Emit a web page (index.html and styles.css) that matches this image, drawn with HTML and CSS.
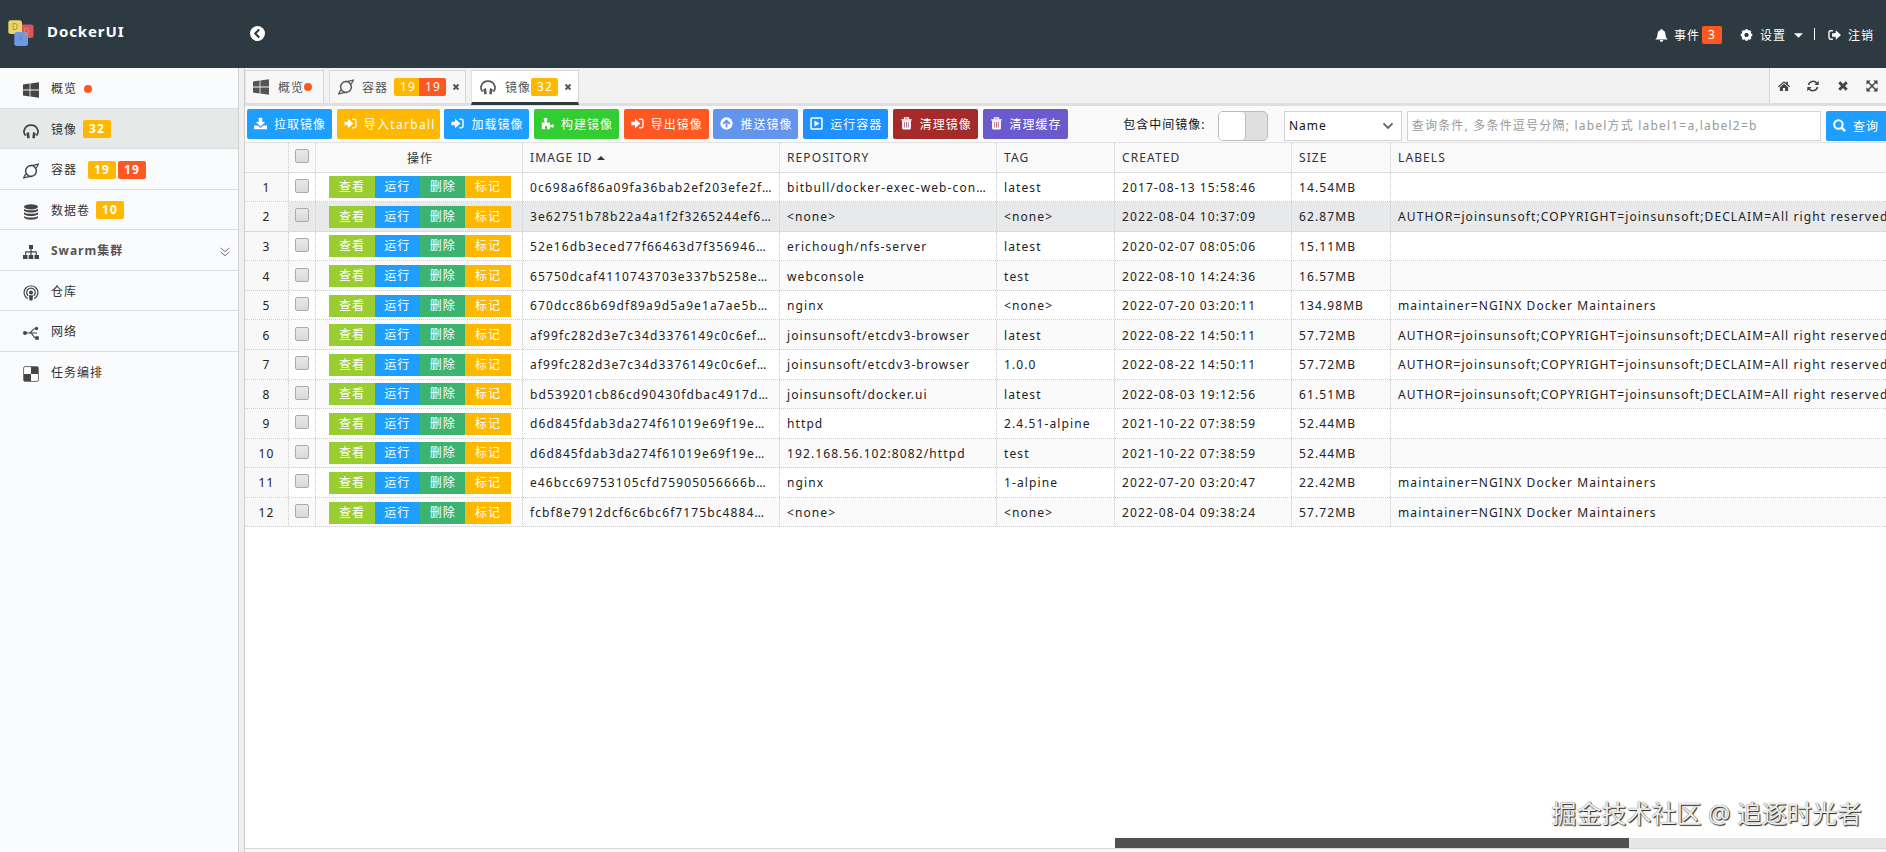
FILE: index.html
```html
<!DOCTYPE html>
<html lang="zh-CN">
<head>
    <meta charset="UTF-8">
    <title>DockerUI</title>
    <link rel="stylesheet" href="styles.css">
</head>
<body>
    <!-- Icon set -->
    <svg class="sprite">
        <symbol id="i-windows" viewBox="0 0 16 16"><path d="M0 2.4l6.6-.9v6.1H0zM7.4 1.4L16 .2v7.4H7.4zM0 8.4h6.6v6.1L0 13.6zM7.4 8.4H16v7.4l-8.6-1.2z"/></symbol>
        <symbol id="i-headphones" viewBox="0 0 16 16"><path d="M2.6 12.6C.9 10.800.7 8.500 1.300 6.900 2.300 4 4.900 2.200 8 2.200s5.700 1.800 6.700 4.700c.6 1.600.4 3.900-1.300 5.700" fill="none" stroke="currentColor" stroke-width="1.700"/><path d="M3.200 10.200L6 8.900l.7 6-2.300.5zM12.800 10.200L10 8.900l-.7 6 2.300.5z"/></symbol>
        <symbol id="i-ring" viewBox="0 0 16 16"><circle cx="8" cy="8" r="5.400" fill="none" stroke="currentColor" stroke-width="1.500"/><path d="M7 2.600c3-.2 5.500-.6 8.300-1.500-.3 1.500-1 2.700-2.300 3.900M9 13.400c-3 .2-5.500.6-8.300 1.500.3-1.500 1-2.700 2.300-3.900" fill="none" stroke="currentColor" stroke-width="1.200"/></symbol>
        <symbol id="i-database" viewBox="0 0 16 16"><ellipse cx="8" cy="2.800" rx="7" ry="2.600"/><path d="M1 4.700c2 2 12 2 14 0v2c-2 2.400-12 2.400-14 0zM1 8.300c2 2 12 2 14 0v2c-2 2.400-12 2.400-14 0zM1 11.900c2 2 12 2 14 0v1.600c-2 2.900-12 2.900-14 0z"/></symbol>
        <symbol id="i-sitemap" viewBox="0 0 16 16"><path d="M6 1h4v4H8.600v2.300h5.200V11H16v4h-4.500v-4h1.200V8.500H8.600V11h1.700v4H5.700v-4h1.700V8.500H3.300V11h1.200v4H0v-4h2.200V7.300h5.200V5H6z"/></symbol>
        <symbol id="i-podcast" viewBox="0 0 16 16"><g fill="none" stroke="currentColor" stroke-width="1.200"><path d="M4.700 13.700a6.900 6.900 0 1 1 6.600 0"/><path d="M5.200 10.700a4.300 4.300 0 1 1 5.600 0"/></g><circle cx="8" cy="7.500" r="2"/><path d="M5.900 10.200h4.200l-.6 5.300h-3z"/></symbol>
        <symbol id="i-share" viewBox="0 0 16 16"><path d="M1.500 8H14M6 8c3 0 2.500-4.500 7-4.500M7.500 8c2.500 0 2 5 6 5" fill="none" stroke="currentColor" stroke-width="1.200"/><circle cx="2" cy="8" r="2"/><circle cx="13.500" cy="3.500" r="1.700"/><path d="M12.300 11.300h3.500v3.500h-3.500z"/></symbol>
        <symbol id="i-board" viewBox="0 0 16 16"><rect x=".6" y=".6" width="14.800" height="14.800" rx="1.500" fill="#fff" stroke="currentColor" stroke-width=".8"/><path d="M8 1h7v7H8zM1 8h7v7H1z"/></symbol>
        <symbol id="i-down2" viewBox="0 0 16 16"><path d="M1 1.500l7 6 7-6M1 8l7 6 7-6" fill="none" stroke="currentColor" stroke-width="1.600"/></symbol>
        <symbol id="i-back" viewBox="0 0 16 16"><circle cx="8" cy="8" r="8"/><path d="M9.800 3.800L5.600 8l4.200 4.200" fill="none" stroke="#2d3a41" stroke-width="2.200"/></symbol>
        <symbol id="i-bell" viewBox="0 0 16 16"><path d="M8 0c.8 0 1.100.5 1.100 1.200C11.800 1.900 12.700 4 12.900 6.500c.2 3 .9 4.900 2.700 6.300H.4C2.200 11.400 2.900 9.500 3.100 6.500 3.300 4 4.200 1.900 6.900 1.200 6.900.5 7.200 0 8 0zM5.900 13.500h4.200C9.900 16.600 6.100 16.600 5.900 13.500z"/></symbol>
        <symbol id="i-cog" viewBox="0 0 16 16"><circle cx="8" cy="8" r="4.300" fill="none" stroke="currentColor" stroke-width="3.600"/><path d="M8 .9v3M8 12.100v3M.9 8h3M12.100 8h3M3 3l2 2M11 11l2 2M3 13l2-2M11 5l2-2" stroke="currentColor" stroke-width="3"/><circle cx="8" cy="8" r="2.400" fill="#2d3a41"/></symbol>
        <symbol id="i-caret" viewBox="0 0 16 8"><path d="M0 0h16L8 8z"/></symbol>
        <symbol id="i-logout" viewBox="0 0 16 16"><path d="M6 2.800H3.200Q1.200 2.800 1.200 4.800v6.400q0 2 2 2H6" fill="none" stroke="currentColor" stroke-width="1.700"/><path d="M5 5.800h4.500V2.300L16 8l-6.500 5.700v-3.500H5z"/></symbol>
        <symbol id="i-login" viewBox="0 0 16 16"><path d="M10 2.800h2.800q2 0 2 2v6.400q0 2-2 2H10" fill="none" stroke="currentColor" stroke-width="1.700"/><path d="M.5 5.800H5V2.300L11.500 8 5 13.700v-3.500H.5z"/></symbol>
        <symbol id="i-home" viewBox="0 0 16 16"><path d="M8 1.500l3 2.600V2.300h2.200V6L16 8.400l-1 1.100-7-6-7 6L0 8.400z"/><path d="M8 4.900l5.500 4.600v5h-4v-4h-3v4h-4v-5z"/></symbol>
        <symbol id="i-refresh" viewBox="0 0 16 16"><path d="M2 6.700a6.200 6.200 0 0 1 11-2.400M14 9.300a6.200 6.200 0 0 1-11 2.400" fill="none" stroke="currentColor" stroke-width="2"/><path d="M15.600 1v5.800H9.800zM.4 15V9.200h5.800z"/></symbol>
        <symbol id="i-times" viewBox="0 0 16 16"><path d="M3 3l10 10M13 3L3 13" stroke="currentColor" stroke-width="3.800"/></symbol>
        <symbol id="i-expand" viewBox="0 0 16 16"><path d="M3 3l10 10M13 3L3 13" stroke="currentColor" stroke-width="2"/><path d="M.6.600h5.800L.6 6.400zM15.400.6v5.800L9.600.6zM.6 15.400V9.600l5.800 5.800zM15.400 15.400H9.600l5.800-5.800z"/></symbol>
        <symbol id="i-download" viewBox="0 0 16 16"><path d="M5.800.8h4.400V6h3.600L8 11.600 2.200 6h3.600z"/><path d="M0 10.500h4.600L8 13.600l3.400-3.100H16v4.700H0z"/></symbol>
        <symbol id="i-puzzle" viewBox="0 0 16 16"><path d="M1 6.800h3.500C5.200 5.600 3.200 4.700 3.300 3 3.400.2 8 .2 8 3c0 1.700-1.800 2.600-1.100 3.800H11v3c1.200.8 1.800-.8 3.200-.8 2.400 0 2.400 4 0 4-1.400 0-2-1.500-3.200-.8v3H7.300c-.6-1.200.4-1.500.4-2.700 0-1.700-3-1.700-3 0 0 1.200 1 1.500.3 2.700H1z"/></symbol>
        <symbol id="i-up" viewBox="0 0 16 16"><circle cx="8" cy="8" r="7.600"/><path d="M8 13V5M3.800 8.600L8 4.400l4.200 4.200" fill="none" stroke="#6495ed" stroke-width="2.200"/></symbol>
        <symbol id="i-play" viewBox="0 0 16 16"><rect x="1.300" y="1.300" width="13.400" height="13.400" rx="1" fill="none" stroke="currentColor" stroke-width="1.900"/><path d="M5.500 4.200L11.800 8l-6.300 3.800z"/></symbol>
        <symbol id="i-trash" viewBox="0 0 16 16"><path d="M5.500 3V1.200h5V3M1.500 3.500h13" fill="none" stroke="currentColor" stroke-width="1.500"/><path d="M2.600 4h10.800v9.800q0 1.700-1.700 1.700H4.300q-1.700 0-1.700-1.700z"/><path d="M5.700 6v7M8 6v7M10.300 6v7" stroke="#a05078" stroke-width="1"/></symbol>
        <symbol id="i-search" viewBox="0 0 16 16"><path d="M10.500 10.500L15 15" stroke="currentColor" stroke-width="3"/><circle cx="6.700" cy="6.700" r="5.200" fill="none" stroke="currentColor" stroke-width="2.500"/></symbol>
        <symbol id="i-chevron" viewBox="0 0 16 16"><path d="M2 4.500l6 6 6-6" fill="none" stroke="currentColor" stroke-width="2.500"/></symbol>
    </svg>

    <div class="header">
        <svg class="logo" viewBox="0 0 26 27">
            <rect x="12" y="4.500" width="13.500" height="13.500" rx="2.500" fill="#d9575b"/>
            <rect x=".3" y=".3" width="13.700" height="13.700" rx="2.500" fill="#ead467"/>
            <rect x="6.300" y="12" width="13.700" height="14" rx="2.500" fill="#6b9be8"/>
            <text x="4" y="10" fill="#a39044">D</text>
            <text x="15.500" y="14.500" fill="#ea8465">D</text>
            <text x="10.500" y="22" fill="#8878c0">A</text>
        </svg>
        <span class="brand">DockerUI</span>
        <svg class="icon toggle"><use href="#i-back"/></svg>
        <div class="user-menu">
            <svg class="icon bell"><use href="#i-bell"/></svg><span>事件</span><b class="badge red count">3</b>
            <svg class="icon cog"><use href="#i-cog"/></svg><span>设置</span><svg class="icon caret"><use href="#i-caret"/></svg>
            <i class="divider"></i>
            <svg class="icon out"><use href="#i-logout"/></svg><span>注销</span>
        </div>
    </div>

    <div class="main">
        <div class="sidebar">
            <div class="item"><svg class="icon"><use href="#i-windows"/></svg><span>概览</span><i class="dot"></i></div>
            <div class="item active"><svg class="icon"><use href="#i-headphones"/></svg><span>镜像</span><b class="badge">32</b></div>
            <div class="item"><svg class="icon"><use href="#i-ring"/></svg><span>容器</span><b class="badge far">19</b><b class="badge red">19</b></div>
            <div class="item"><svg class="icon"><use href="#i-database"/></svg><span>数据卷</span><b class="badge">10</b></div>
            <div class="item"><svg class="icon"><use href="#i-sitemap"/></svg><span class="group">Swarm集群</span><svg class="icon fold"><use href="#i-down2"/></svg></div>
            <div class="item"><svg class="icon"><use href="#i-podcast"/></svg><span>仓库</span></div>
            <div class="item"><svg class="icon"><use href="#i-share"/></svg><span>网络</span></div>
            <div class="item last"><svg class="icon"><use href="#i-board"/></svg><span>任务编排</span></div>
        </div>
        <div class="splitter"></div>

        <div class="content">
            <div class="tabs">
                <div class="tab t1"><svg class="icon"><use href="#i-windows"/></svg><span>概览</span><i class="dot"></i></div>
                <div class="tab t2"><svg class="icon"><use href="#i-ring"/></svg><span>容器</span><b class="badge left">19</b><b class="badge red right">19</b><svg class="icon close"><use href="#i-times"/></svg></div>
                <div class="tab t3 selected"><svg class="icon"><use href="#i-headphones"/></svg><span>镜像</span><b class="badge">32</b><svg class="icon close"><use href="#i-times"/></svg></div>
                <div class="tools">
                    <svg class="icon"><use href="#i-home"/></svg>
                    <svg class="icon"><use href="#i-refresh"/></svg>
                    <svg class="icon"><use href="#i-times"/></svg>
                    <svg class="icon"><use href="#i-expand"/></svg>
                </div>
            </div>

            <div class="toolbar">
                <a class="btn pull"><svg class="icon"><use href="#i-download"/></svg><span>拉取镜像</span></a>
                <a class="btn import"><svg class="icon"><use href="#i-login"/></svg><span>导入tarball</span></a>
                <a class="btn load"><svg class="icon"><use href="#i-login"/></svg><span>加载镜像</span></a>
                <a class="btn build"><svg class="icon"><use href="#i-puzzle"/></svg><span>构建镜像</span></a>
                <a class="btn export"><svg class="icon"><use href="#i-login"/></svg><span>导出镜像</span></a>
                <a class="btn push"><svg class="icon"><use href="#i-up"/></svg><span>推送镜像</span></a>
                <a class="btn run"><svg class="icon"><use href="#i-play"/></svg><span>运行容器</span></a>
                <a class="btn prune"><svg class="icon"><use href="#i-trash"/></svg><span>清理镜像</span></a>
                <a class="btn cache"><svg class="icon"><use href="#i-trash"/></svg><span>清理缓存</span></a>
                <span class="switch-label">包含中间镜像:</span>
                <span class="switch"><i></i></span>
                <div class="select"><span>Name</span><svg class="icon"><use href="#i-chevron"/></svg></div>
                <div class="input">查询条件, 多条件逗号分隔; label方式 label1=a,label2=b</div>
                <a class="btn query"><svg class="icon"><use href="#i-search"/></svg><span>查询</span></a>
            </div>

            <div class="grid" id="grid">
                <div class="row head">
                    <div class="num"></div>
                    <div class="check"><i class="box"></i></div>
                    <div class="ops">操作</div>
                    <div>IMAGE ID<svg class="icon sort"><use href="#i-caret"/></svg></div>
                    <div>REPOSITORY</div>
                    <div>TAG</div>
                    <div>CREATED</div>
                    <div>SIZE</div>
                    <div>LABELS</div>
                </div>
            </div>

            <div class="filler"><div class="watermark">掘金技术社区 @ 追逐时光者</div></div>
            <div class="scrollbar"><i></i></div>
            <div class="footer"></div>
        </div>
    </div>
    <script src="script.js"></script>
</body>
</html>
```

FILE: styles.css
```css
* {
    box-sizing: border-box;
}
body {
    margin: 0;
    width: 1886px;
    height: 852px;
    overflow: hidden;
    display: flex;
    flex-direction: column;
    font-family: "Noto Sans", "Noto Sans CJK SC", sans-serif;
    font-size: 12px;
    letter-spacing: 1px;
    color: #333;
    background: #fff;
}
.sprite {
    display: none;
}
.icon {
    width: 16px;
    height: 16px;
    flex: none;
    fill: currentColor;
}
span {
    white-space: nowrap;
}
.badge {
    height: 18px;
    padding: 0 5px 0 6px;
    line-height: 18px;
    border-radius: 2px;
    color: #fff;
    background: #ffb800;
}
.badge.red {
    background: #ff5722;
}
.dot {
    width: 8px;
    height: 8px;
    border-radius: 50%;
    background: #ff5722;
}

/* header */
.header {
    height: 68px;
    flex: none;
    display: flex;
    align-items: center;
    padding: 0 12px 2px 8px;
    color: #fff;
    background: #2d3a41;
}
.logo {
    width: 26px;
    height: 27px;
    font-size: 8px;
    letter-spacing: 0;
}
.brand {
    width: 203px;
    margin: -4px 0 0 13px;
    font-size: 15px;
    font-weight: bold;
    letter-spacing: 0.9px;
}
.toggle {
    width: 15px;
    height: 15px;
}
.user-menu {
    display: flex;
    align-items: center;
    margin: 4px 0 0 auto;
}
.user-menu span {
    margin-top: -1px;
}
.bell {
    width: 13px;
    height: 15px;
    margin-right: 6px;
}
.count {
    width: 20px;
    padding: 0 6px;
    margin-left: 2px;
    font-weight: normal;
}
.cog {
    width: 13px;
    margin: 0 7px 0 18px;
}
.caret {
    width: 9px;
    height: 5px;
    margin: 0 11px 0 8px;
}
.divider {
    width: 1px;
    height: 12px;
    margin: -2px 13px 0 0;
    background: #fff;
}
.out {
    width: 13px;
    margin-right: 7px;
}

/* left menu */
.main {
    flex: 1;
    display: flex;
    min-height: 0;
}
.sidebar {
    width: 238px;
    flex: none;
    background: #fafbfd;
}
.item {
    height: 40.5px;
    display: flex;
    align-items: center;
    padding: 5px 8px 0 23px;
    border-bottom: 1px solid #dcdde0;
    color: #333;
}
.item.active {
    background: #e7e8e8;
}
.item.last {
    border-bottom: 0;
}
.item > .icon {
    color: #444;
}
.item span {
    margin: -4px 5px 0 12px;
}
.item .dot {
    margin: -3px 0 0 2px;
}
.item .badge {
    width: 28px;
    margin: -3px 2px 0 1px;
}
.item .badge.far {
    margin-left: 6px;
}
.item .badge.far + .badge {
    margin-left: 0;
}
.item .group {
    font-weight: bold;
    color: #555;
}
.item .fold {
    width: 10px;
    height: 12px;
    margin-left: auto;
    color: #777;
}
.splitter {
    width: 7px;
    flex: none;
    background: #efefef;
    border-left: 1px solid #d2d2d2;
    border-right: 1px solid #cfcfcf;
}

/* tabs */
.content {
    flex: 1;
    min-width: 0;
    display: flex;
    flex-direction: column;
}
.tabs {
    height: 38px;
    flex: none;
    display: flex;
    padding-top: 2px;
    background: #f2f2f2;
    border-bottom: 3px solid #dfdfdf;
}
.tab {
    height: 33px;
    display: flex;
    align-items: center;
    margin-right: 5px;
    border: 1px solid #d6d6d6;
    border-bottom: 0;
    border-left-color: #e2e2e2;
    color: #555;
    background: #f7f7f7;
}
.tab span {
    margin-left: 9px;
}
.t1 {
    width: 79px;
    padding-left: 7px;
}
.t2 {
    width: 137px;
    padding-left: 8px;
}
.t2 span {
    margin-left: 8px;
}
.t3 {
    width: 108px;
    padding-left: 8px;
}
.tab .badge {
    width: 27px;
    font-weight: normal;
}
.tab .left {
    width: 25px;
    margin-left: 6px;
    border-radius: 2px 0 0 2px;
}
.tab .right {
    border-radius: 0 2px 2px 0;
}
.tab.selected {
    height: 35px;
    background: #fff;
    border-bottom: 3px solid #2d3a41;
}
.close {
    width: 8px;
    height: 8px;
    margin-left: 6px;
}
.tools {
    width: 117px;
    display: flex;
    align-items: center;
    justify-content: space-between;
    margin: -2px 0 0 auto;
    padding: 0 8px;
    border-left: 1px solid #d6d6d6;
    color: #444;
    background: #f7f7f7;
}
.tools .icon {
    width: 12px;
    height: 12px;
}

/* toolbar */
.toolbar {
    height: 37px;
    flex: none;
    display: flex;
    align-items: center;
    padding-left: 2px;
    background: #fafafa;
    border-bottom: 1px solid #e2e2e2;
}
.btn {
    width: 85px;
    height: 30px;
    flex: none;
    display: flex;
    align-items: center;
    margin: -1px 4.7px 0 0;
    padding-left: 7px;
    border-radius: 2px;
    color: #fff;
}
.btn .icon {
    width: 13px;
    height: 13px;
    margin-right: 7px;
}
.pull, .load, .query {
    background: #1e9fff;
}
.import {
    width: 103px;
    background: #ffb800;
}
.import span {
    letter-spacing: 1.3px;
}
.build {
    background: #32cd32;
}
.export {
    background: #ff5722;
}
.push {
    background: #6495ed;
}
.run {
    background: #1e90ff;
}
.prune {
    background: #a52a2a;
}
.cache {
    background: #6a5acd;
}
.switch-label {
    width: 95px;
    margin-left: 51px;
    color: #111;
}
.switch {
    width: 50px;
    height: 30px;
    margin: 3px 16px 0 0;
    border: 1px solid #bbb;
    border-radius: 5px;
    background: #dfdfdf;
}
.switch i {
    display: block;
    width: 27px;
    height: 28px;
    border-radius: 4px;
    border-right: 1px solid #bbb;
    background: #fff;
}
.select {
    width: 118px;
    height: 30px;
    display: flex;
    align-items: center;
    justify-content: space-between;
    margin: 3px 5px 0 0;
    padding: 0 7px 0 4px;
    border: 1px solid #d3d3d3;
    color: #111;
    background: #fff;
}
.select .icon {
    width: 12px;
    height: 12px;
    color: #666;
}
.input {
    width: 415px;
    height: 30px;
    margin: 3px 5px 0 0;
    padding-left: 4px;
    border: 1px solid #d3d3d3;
    line-height: 28px;
    letter-spacing: 1.2px;
    white-space: nowrap;
    color: #999;
    background: #fff;
}
.btn.query {
    width: 60px;
    margin: 3px 0 0;
    border-radius: 2px 0 0 2px;
}

/* images table */
.row {
    height: 29.57px;
    display: grid;
    grid-template-columns: 44px 27px 207px 257px 217px 118px 177px 99px 1fr;
    border-bottom: 1px dotted #ccc;
    background: #fff;
    color: #222;
    letter-spacing: 1.1px;
}
.row:nth-child(odd) {
    background: #fafafa;
}
.row.hover {
    background: #e8e9ea;
}
.row.head {
    border-bottom: 1px solid #ddd;
    background: #f9f9f9;
    color: #333;
}
.row > div {
    display: flex;
    align-items: center;
    padding: 1px 0 0 7px;
    border-right: 1px dotted #ccc;
    white-space: nowrap;
    overflow: hidden;
}
.row > div:last-child {
    border-right: 0;
}
.row > .num {
    justify-content: center;
    padding: 1px 0 0;
    background: #f8f8f8;
}
.row > .check {
    padding: 0 0 0 6px;
}
.box {
    width: 14px;
    height: 14px;
    margin-top: -2px;
    border: 1px solid #aaa;
    border-radius: 2px;
    background: linear-gradient(#e9e9e9, #d9d9d9);
}
.row > .ops {
    justify-content: center;
    padding: 1px 0 0 2px;
}
.ops b {
    width: 45.3px;
    height: 22px;
    line-height: 21px;
    text-align: center;
    font-weight: normal;
    letter-spacing: 1px;
    color: #fff;
}
.ops .view {
    background: #9acd32;
}
.ops .start {
    background: #1e9fff;
}
.ops .remove {
    background: #3cb371;
}
.ops .tag {
    background: #ffb800;
}
.sort {
    width: 8px;
    height: 4px;
    margin-left: 4px;
    transform: rotate(180deg);
}
.filler {
    flex: 1;
    display: flex;
    align-items: flex-end;
    justify-content: flex-end;
    padding: 0 24px 8px 0;
}
.watermark {
    font-size: 25px;
    letter-spacing: 0;
    color: #eee;
    text-shadow: 1px 1px 1px #222, 0 0 1px #555;
}
.scrollbar {
    height: 10px;
    flex: none;
    padding-left: 870px;
}
.scrollbar i {
    display: block;
    height: 10px;
    border-left: 514px solid #505050;
    background: #e6e6e6;
}
.footer {
    height: 4px;
    flex: none;
    border-top: 1px solid #d6d6d6;
    background: #f8f8f8;
}
```

FILE: script.js
```javascript
var author = 'AUTHOR=joinsunsoft;COPYRIGHT=joinsunsoft;DECLAIM=All right reserved';
var nginx = 'maintainer=NGINX Docker Maintainers';

var images = [
    ['0c698a6f86a09fa36bab2ef203efe2f…', 'bitbull/docker-exec-web-con…', 'latest', '2017-08-13 15:58:46', '14.54MB', ''],
    ['3e62751b78b22a4a1f2f3265244ef6…', '<none>', '<none>', '2022-08-04 10:37:09', '62.87MB', author],
    ['52e16db3eced77f66463d7f356946…', 'erichough/nfs-server', 'latest', '2020-02-07 08:05:06', '15.11MB', ''],
    ['65750dcaf4110743703e337b5258e…', 'webconsole', 'test', '2022-08-10 14:24:36', '16.57MB', ''],
    ['670dcc86b69df89a9d5a9e1a7ae5b…', 'nginx', '<none>', '2022-07-20 03:20:11', '134.98MB', nginx],
    ['af99fc282d3e7c34d3376149c0c6ef…', 'joinsunsoft/etcdv3-browser', 'latest', '2022-08-22 14:50:11', '57.72MB', author],
    ['af99fc282d3e7c34d3376149c0c6ef…', 'joinsunsoft/etcdv3-browser', '1.0.0', '2022-08-22 14:50:11', '57.72MB', author],
    ['bd539201cb86cd90430fdbac4917d…', 'joinsunsoft/docker.ui', 'latest', '2022-08-03 19:12:56', '61.51MB', author],
    ['d6d845fdab3da274f61019e69f19e…', 'httpd', '2.4.51-alpine', '2021-10-22 07:38:59', '52.44MB', ''],
    ['d6d845fdab3da274f61019e69f19e…', '192.168.56.102:8082/httpd', 'test', '2021-10-22 07:38:59', '52.44MB', ''],
    ['e46bcc69753105cfd75905056666b…', 'nginx', '1-alpine', '2022-07-20 03:20:47', '22.42MB', nginx],
    ['fcbf8e7912dcf6c6bc6f7175bc4884…', '<none>', '<none>', '2022-08-04 09:38:24', '57.72MB', nginx]
];

var grid = document.getElementById('grid');

images.forEach(function (image, index) {
    var row = document.createElement('div');
    row.className = index === 1 ? 'row hover' : 'row';
    row.innerHTML = '<div class="num">' + (index + 1) + '</div>' +
        '<div class="check"><i class="box"></i></div>' +
        '<div class="ops"><b class="view">查看</b><b class="start">运行</b><b class="remove">删除</b><b class="tag">标记</b></div>';
    image.forEach(function (value) {
        var cell = document.createElement('div');
        cell.textContent = value;
        row.appendChild(cell);
    });
    grid.appendChild(row);
});
```
